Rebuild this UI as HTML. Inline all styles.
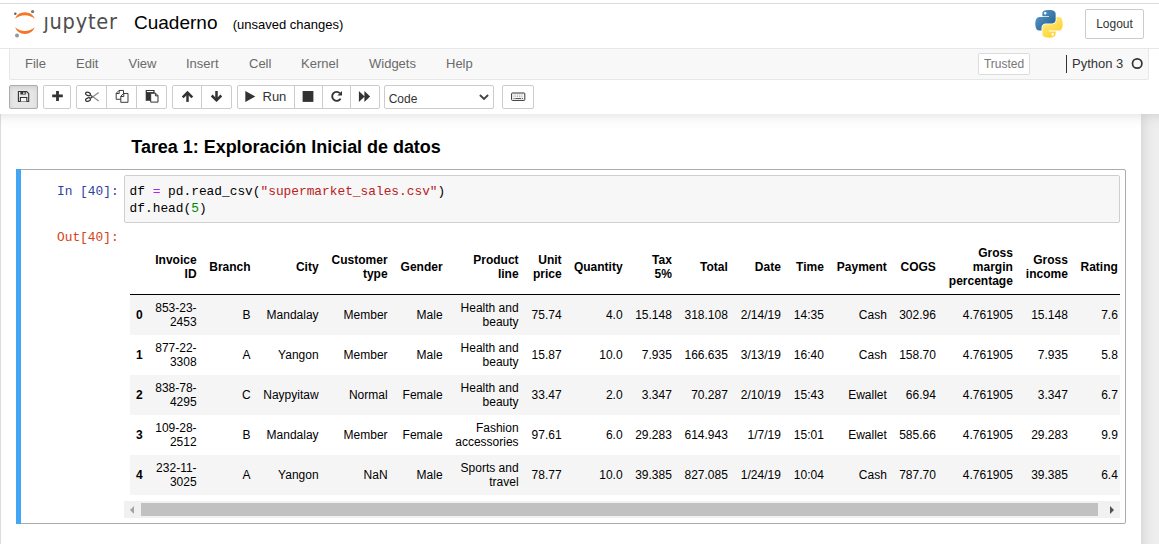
<!DOCTYPE html>
<html lang="es">
<head>
<meta charset="utf-8">
<title>Cuaderno - Jupyter Notebook</title>
<style>
*{box-sizing:border-box}
html,body{margin:0;padding:0}
body{width:1159px;height:544px;overflow:hidden;background:#fff;font-family:"Liberation Sans","Helvetica Neue",Helvetica,Arial,sans-serif;font-size:13px;line-height:1.42857143;color:#000;position:relative}
#topline{position:absolute;left:0;top:3px;width:1159px;height:1px;background:#dadce0;z-index:9}
#header{position:absolute;left:0;top:0;width:1159px;height:114px;background:#fff;z-index:5}
#hsh{position:absolute;left:-40px;top:0;width:1239px;height:114px;box-shadow:0 0 12px 1px rgba(87,87,87,0.2);z-index:4}

#logotext{position:absolute;left:43.4px;top:7.1px;font-family:"DejaVu Sans","Liberation Sans",sans-serif;font-stretch:condensed;font-size:21.6px;line-height:30px;color:#4e4e4e;letter-spacing:0.75px;white-space:nowrap}
#jdot{position:absolute;left:43.2px;top:10px;width:7px;height:6.3px;background:#fff}
#nbname{position:absolute;left:134px;top:8.8px;font-size:19px;line-height:27px;color:#000;white-space:nowrap}
#nbname .chk{font-size:13px;margin-left:15.3px;position:relative;top:0px}
#pylogo{position:absolute;left:1034.8px;top:10.1px;width:28px;height:28px}#pylogo svg{display:block}
#logout{position:absolute;left:1085px;top:9px;width:59px;height:30px;border:1px solid #ccc;border-radius:2px;background:#fff;color:#333;font-size:12px;line-height:28px;text-align:center}
#menubar{position:absolute;left:9px;top:48px;width:1140px;height:32px;background:#f8f8f8;border:1px solid #e7e7e7;border-radius:0 0 2px 2px}
#hline{position:absolute;left:0;top:48px;width:1159px;height:1px;background:#e7e7e7}
#menubar .mi{position:absolute;top:0;line-height:30px;font-size:13px;color:#6a6a6a;white-space:nowrap}
#trusted{position:absolute;left:968px;top:4px;width:52px;height:22px;border:1px solid #ddd;border-radius:2px;color:#777;font-size:12px;line-height:20px;text-align:center;background:#fff}
#kname{position:absolute;left:1056px;top:6px;height:18px;border-left:1px solid #333;padding-left:5px;line-height:18px;font-size:13px;color:#333;white-space:nowrap}
#kind{position:absolute;left:1122.2px;top:9px;width:11px;height:11px;border:1.6px solid #333;border-radius:50%}
.tb{position:absolute;top:85px;height:24px;border:1px solid #ccc;background:#fff;color:#333}
.tb.act{background:#e6e6e6;border-color:#adadad;box-shadow:inset 0 2px 4px rgba(0,0,0,.09)}
#icons{position:absolute;left:0;top:0;width:1159px;height:114px;pointer-events:none}
#runtxt{position:absolute;left:262.5px;top:87px;font-size:13px;line-height:19px;color:#333}
#seltxt{position:absolute;left:388.7px;top:90.5px;font-size:12px;line-height:17px;color:#333}
#site{position:absolute;left:0;top:114px;width:1159px;height:430px;background:#eee;overflow:hidden}
#nbc{position:absolute;left:1px;top:0;width:1140px;height:440px;background:#fff;box-shadow:0 0 12px 1px rgba(87,87,87,0.2)}
#hshadow{position:absolute;left:0;top:0;width:1159px;height:8px;background:linear-gradient(to bottom,rgba(87,87,87,0.10),rgba(87,87,87,0));z-index:3}
h3.md{position:absolute;left:130.3px;top:24.2px;margin:0;font-size:18px;line-height:1;font-weight:bold;color:#000;white-space:nowrap;letter-spacing:-0.035px}
#cell{position:absolute;left:15px;top:55px;width:1110px;height:355px;border:1px solid #ababab;border-radius:2px;background:#fff}
#cell:before{content:"";position:absolute;left:-1px;top:-1px;width:5px;height:355px;background:#42a5f5}
.prompt{position:absolute;font-family:"Liberation Mono","DejaVu Sans Mono",monospace;font-size:12.83px;line-height:17px;white-space:pre}
#inp{left:40px;top:12.5px;color:#303f9f}
#outp{left:40px;top:58.5px;color:#d84315}
#inarea{position:absolute;left:107px;top:5px;width:996px;height:48px;border:1px solid #cfcfcf;border-radius:2px;background:#f7f7f7}
#code{position:absolute;left:4.6px;top:6.5px;margin:0;font-family:"Liberation Mono","DejaVu Sans Mono",monospace;font-size:12.83px;line-height:17px;white-space:pre;color:#000}
.s{color:#ba2121}.o{color:#aa22ff}.n{color:#008800}
#sub{position:absolute;left:107px;top:52px;width:996px;height:296px;overflow:hidden}
table.df{position:absolute;left:5.6px;top:17.6px;border-collapse:collapse;border-spacing:0;border:none;color:#000;font-size:12px;table-layout:fixed;width:994.25px}
table.df thead{border-bottom:1px solid #000;vertical-align:bottom}
table.df th,table.df td{text-align:right;vertical-align:middle;padding:6px;line-height:14px;white-space:normal;border:none}
table.df th{font-weight:bold}
table.df tbody tr:nth-child(odd){background:#f5f5f5}
#sb{position:absolute;left:0;top:279px;width:996px;height:17px;background:#f1f1f1}
#sb .thumb{position:absolute;left:17px;top:2px;height:13px;width:957px;background:#c1c1c1}
#sb .al,#sb .ar{position:absolute;top:5px;width:0;height:0;border-top:4px solid transparent;border-bottom:4px solid transparent}
#sb .al{left:6px;border-right:4px solid #a3a3a3}
#sb .ar{right:6px;border-left:4px solid #505050}
</style>
</head>
<body>
<div id="topline"></div>
<div id="hsh"></div>
<div id="header">
    <div id="logotext">jupyter</div><div id="jdot"></div>
  <div id="nbname">Cuaderno<span class="chk">(unsaved changes)</span></div>
  <div id="pylogo"><svg viewBox="0 0 111 113" width="28" height="28">
<defs>
<linearGradient id="pyb" x1="0" y1="0" x2="0.75" y2="0.75"><stop offset="0" stop-color="#5a9fd4"/><stop offset="1" stop-color="#306998"/></linearGradient>
<linearGradient id="pyy" x1="0.7" y1="0.75" x2="0.3" y2="0.2"><stop offset="0" stop-color="#ffd43b"/><stop offset="1" stop-color="#ffe873"/></linearGradient>
</defs>
<path fill="url(#pyb)" d="M54.918785,0.00091927421 C50.335132,0.02221727 45.957846,0.41313697 42.106285,1.0946693 30.760069,3.0991731 28.700036,7.2947714 28.700035,15.032169 L28.700035,25.250919 55.512535,25.250919 55.512535,28.657169 28.700035,28.657169 18.637535,28.657169 C10.845076,28.657169 4.0217762,33.340886 1.8875352,42.250919 -0.57428478,52.463885 -0.68348478,58.836942 1.8875352,69.500919 3.7934635,77.438771 8.3451324,83.094666 16.137535,83.094669 L25.356285,83.094669 25.356285,70.844669 C25.356285,61.994767 33.013429,54.188421 42.106285,54.188419 L68.887535,54.188419 C76.342486,54.188419 82.293788,48.050255 82.293785,40.563419 L82.293785,15.032169 C82.293785,7.7657635 76.163805,2.3073292 68.887535,1.0946693 64.281548,0.32794397 59.502438,-0.02037903 54.918785,0.00091927421 Z M40.418785,8.2196693 C43.188335,8.2196693 45.450035,10.518376 45.450035,13.344669 45.450032,16.160937 43.188334,18.438419 40.418785,18.438419 37.639312,18.438419 35.387536,16.160937 35.387535,13.344669 35.387532,10.518376 37.639312,8.2196693 40.418785,8.2196693 Z"/>
<path fill="url(#pyy)" d="M85.637535,28.657169 L85.637535,40.563419 C85.637535,49.794203 77.811743,57.563417 68.887535,57.563419 L42.106285,57.563419 C34.770398,57.563419 28.700035,63.841951 28.700035,71.188419 L28.700035,96.719669 C28.700035,103.98607 35.018679,108.26002 42.106285,110.34467 50.593611,112.84029 58.732397,113.29132 68.887535,110.34467 75.637785,108.39028 82.293788,104.45712 82.293785,96.719669 L82.293785,86.500919 55.512535,86.500919 55.512535,83.094669 82.293785,83.094669 95.700035,83.094669 C103.49249,83.094669 106.39628,77.659272 109.10629,69.500919 111.90562,61.102111 111.78651,53.025326 109.10629,42.250919 107.18046,34.493034 103.50232,28.657169 95.700035,28.657169 L85.637535,28.657169 Z M70.575035,93.313419 C73.354508,93.313419 75.606285,95.590901 75.606285,98.407169 75.606282,101.23346 73.354508,103.53217 70.575035,103.53217 67.805485,103.53217 65.543785,101.23346 65.543785,98.407169 65.543788,95.590901 67.805485,93.313419 70.575035,93.313419 Z"/>
</svg></div>
  <div id="logout">Logout</div>
  <div id="hline"></div>
  <div id="menubar">
    <span class="mi" style="left:15px">File</span>
    <span class="mi" style="left:66px">Edit</span>
    <span class="mi" style="left:118.5px">View</span>
    <span class="mi" style="left:176px">Insert</span>
    <span class="mi" style="left:239px">Cell</span>
    <span class="mi" style="left:291px">Kernel</span>
    <span class="mi" style="left:359px">Widgets</span>
    <span class="mi" style="left:436px">Help</span>
    <div id="trusted">Trusted</div>
    <div id="kname">Python 3</div>
  </div>
  <div id="toolbar">
    <div class="tb act" style="left:9px;width:29px;border-radius:2px"></div>
    <div class="tb " style="left:43px;width:28px;border-radius:2px"></div>
    <div class="tb " style="left:76px;width:31px;border-radius:2px 0 0 2px"></div>
    <div class="tb " style="left:106px;width:31px;border-radius:0"></div>
    <div class="tb " style="left:136px;width:31px;border-radius:0 2px 2px 0"></div>
    <div class="tb " style="left:172px;width:30px;border-radius:2px 0 0 2px"></div>
    <div class="tb " style="left:201px;width:31px;border-radius:0 2px 2px 0"></div>
    <div class="tb " style="left:237px;width:58px;border-radius:2px 0 0 2px"></div>
    <div class="tb " style="left:294px;width:29px;border-radius:0"></div>
    <div class="tb " style="left:322px;width:29px;border-radius:0"></div>
    <div class="tb " style="left:350px;width:30px;border-radius:0 2px 2px 0"></div>
    <div class="tb " style="left:384px;width:110px;border-radius:2px"></div>
    <div class="tb " style="left:502px;width:32px;border-radius:2px"></div>
    <span id="runtxt">Run</span>
    <span id="seltxt">Code</span>
    <svg id="icons" viewBox="0 0 1159 114">
      <!-- jupyter logo -->
      <g id="jlogo">
        <path d="M15,18.8 A10.79,10.79 0 0 1 34.8,18.8 A15.4,15.4 0 0 0 15,18.8Z" fill="#f37726"/>
        <path d="M15,27.3 A10.66,10.66 0 0 0 34.8,27.3 A15.1,15.1 0 0 1 15,27.3Z" fill="#f37726"/>
        <circle cx="32.6" cy="11.6" r="1.6" fill="#767677"/>
        <circle cx="15.3" cy="13.8" r="1.25" fill="#616262"/>
        <circle cx="17" cy="35.5" r="2" fill="#989798"/>
      </g>
      <circle cx="1137.2" cy="63.5" r="4.7" fill="none" stroke="#333" stroke-width="1.7"/>
      <!-- save -->
      <g fill="none" stroke="#333" stroke-width="1.1">
        <path d="M18.4,91.5 H26.6 L28.7,93.6 V101.5 H18.4Z"/>
        <path d="M20.4,101.5 V97.5 H26.8 V101.5" fill="#f6f6f6"/>
      </g>
      <path d="M20.4,91.5 H25.8 V94.6 H20.4Z M23.2,92.2 V93.9 H24.6 V92.2Z" fill="#333" fill-rule="evenodd"/>
      <!-- plus -->
      <path d="M56.1,90.9 H58.9 V94.6 H62.8 V97.3 H58.9 V101 H56.1 V97.3 H52.2 V94.6 H56.1Z" fill="#333"/>
      <!-- scissors -->
      <g fill="none" stroke="#333">
        <ellipse cx="88" cy="93.9" rx="2.5" ry="1.65" stroke-width="1.2" transform="rotate(22 88 93.9)"/>
        <ellipse cx="88" cy="99.6" rx="2.5" ry="1.65" stroke-width="1.2" transform="rotate(-22 88 99.6)"/>
        <path d="M90.4,95.2 L93.2,96.9 M90.4,98.3 L93.2,96.6" stroke-width="1.2"/>
        <path d="M92.6,97 L98.7,92.5 M92.6,96.5 L98.7,101" stroke-width="1.3" stroke="#8c8c8c"/>
      </g>
      <!-- copy -->
      <g fill="#fff" stroke="#333" stroke-width="0.95">
        <path d="M119,90.45 H123.5 V99.3 H116.2 V93.3Z"/>
        <path d="M116.2,93.5 H119.2 V90.45" fill="none"/>
        <path d="M123.6,93.45 H128 V102.3 H120.8 V96.3Z"/>
        <path d="M120.8,96.5 H123.8 V93.45" fill="none"/>
      </g>
      <!-- paste -->
      <path d="M145.7,90 H154.6 V100.8 H145.7Z" fill="#333"/>
      <path d="M146.9,91 H153.4 V92.1 H146.9Z" fill="#fff"/>
      <path d="M150.7,93.2 H155.6 L158,95.6 V102.1 H150.7Z" fill="#fff" stroke="#333" stroke-width="1"/>
      <path d="M155.4,93.2 V95.8 H158" fill="none" stroke="#333" stroke-width="1"/>
      <!-- arrow up -->
      <path d="M187.5,92.4 V101.9" stroke="#333" stroke-width="2.5" fill="none"/>
      <path d="M182.7,97.4 L187.5,92.6 L192.3,97.4" stroke="#333" stroke-width="2.5" fill="none" stroke-linejoin="miter"/>
      <!-- arrow down -->
      <path d="M216.5,91 V100.5" stroke="#333" stroke-width="2.5" fill="none"/>
      <path d="M211.7,95.5 L216.5,100.3 L221.3,95.5" stroke="#333" stroke-width="2.5" fill="none" stroke-linejoin="miter"/>
      <!-- play -->
      <path d="M245.3,91 L255.3,96.45 L245.3,101.9Z" fill="#333"/>
      <!-- stop -->
      <path d="M302.6,91 H313.4 V101.9 H302.6Z" fill="#333"/>
      <!-- repeat -->
      <path d="M339.9,93.2 A4.5,4.5 0 1 0 340.6,98.6" fill="none" stroke="#333" stroke-width="1.9"/>
      <path d="M342,91 V95.6 H337.4Z" fill="#333"/>
      <!-- fast forward -->
      <path d="M358.9,91 L364.6,96.45 L358.9,101.9Z M364.4,91 L370.1,96.45 L364.4,101.9Z" fill="#333"/>
      <!-- chevron -->
      <path d="M479.9,95 L484,99 L488.1,95" fill="none" stroke="#444" stroke-width="1.9"/>
      <!-- keyboard -->
      <rect x="511.6" y="93" width="13.2" height="7.4" rx="0.8" fill="#fff" stroke="#333" stroke-width="1"/>
      <path d="M513.5,95 H523 M513.5,96.7 H523" stroke="#999" stroke-width="0.9" stroke-dasharray="1 0.8" fill="none"/>
      <path d="M513.5,98.5 H514.6 M515.3,98.5 H521 M521.8,98.5 H523" stroke="#444" stroke-width="0.9" fill="none"/>
    </svg>
  </div>
</div>
<div id="site">
  <div id="nbc">
    <h3 class="md">Tarea 1: Exploración Inicial de datos</h3>
    <div id="cell">
      <div class="prompt" id="inp">In [40]:</div>
      <div id="inarea"><pre id="code">df <span class="o">=</span> pd.read_csv(<span class="s">"supermarket_sales.csv"</span>)
df.head(<span class="n">5</span>)</pre></div>
      <div class="prompt" id="outp">Out[40]:</div>
      <div id="sub">
        <table class="df">
          <colgroup><col style="width:19px"><col style="width:54px"><col style="width:54px"><col style="width:68px"><col style="width:69px"><col style="width:55px"><col style="width:76px"><col style="width:43px"><col style="width:61px"><col style="width:49.25px"><col style="width:56px"><col style="width:53px"><col style="width:43px"><col style="width:63px"><col style="width:49px"><col style="width:77px"><col style="width:55px"><col style="width:50px"></colgroup>
          <thead><tr><th></th><th>Invoice ID</th><th>Branch</th><th>City</th><th>Customer type</th><th>Gender</th><th>Product line</th><th>Unit price</th><th>Quantity</th><th>Tax 5%</th><th>Total</th><th>Date</th><th>Time</th><th>Payment</th><th>COGS</th><th>Gross margin percentage</th><th>Gross income</th><th>Rating</th></tr></thead>
          <tbody>
          <tr><th>0</th><td>853-23-2453</td><td>B</td><td>Mandalay</td><td>Member</td><td>Male</td><td>Health and beauty</td><td>75.74</td><td>4.0</td><td>15.148</td><td>318.108</td><td>2/14/19</td><td>14:35</td><td>Cash</td><td>302.96</td><td>4.761905</td><td>15.148</td><td>7.6</td></tr>
          <tr><th>1</th><td>877-22-3308</td><td>A</td><td>Yangon</td><td>Member</td><td>Male</td><td>Health and beauty</td><td>15.87</td><td>10.0</td><td>7.935</td><td>166.635</td><td>3/13/19</td><td>16:40</td><td>Cash</td><td>158.70</td><td>4.761905</td><td>7.935</td><td>5.8</td></tr>
          <tr><th>2</th><td>838-78-4295</td><td>C</td><td>Naypyitaw</td><td>Normal</td><td>Female</td><td>Health and beauty</td><td>33.47</td><td>2.0</td><td>3.347</td><td>70.287</td><td>2/10/19</td><td>15:43</td><td>Ewallet</td><td>66.94</td><td>4.761905</td><td>3.347</td><td>6.7</td></tr>
          <tr><th>3</th><td>109-28-2512</td><td>B</td><td>Mandalay</td><td>Member</td><td>Female</td><td>Fashion accessories</td><td>97.61</td><td>6.0</td><td>29.283</td><td>614.943</td><td>1/7/19</td><td>15:01</td><td>Ewallet</td><td>585.66</td><td>4.761905</td><td>29.283</td><td>9.9</td></tr>
          <tr><th>4</th><td>232-11-3025</td><td>A</td><td>Yangon</td><td>NaN</td><td>Male</td><td>Sports and travel</td><td>78.77</td><td>10.0</td><td>39.385</td><td>827.085</td><td>1/24/19</td><td>10:04</td><td>Cash</td><td>787.70</td><td>4.761905</td><td>39.385</td><td>6.4</td></tr>
          </tbody>
        </table>
        <div id="sb"><div class="al"></div><div class="thumb"></div><div class="ar"></div></div>
      </div>
    </div>
  </div>
</div>
</body>
</html>
